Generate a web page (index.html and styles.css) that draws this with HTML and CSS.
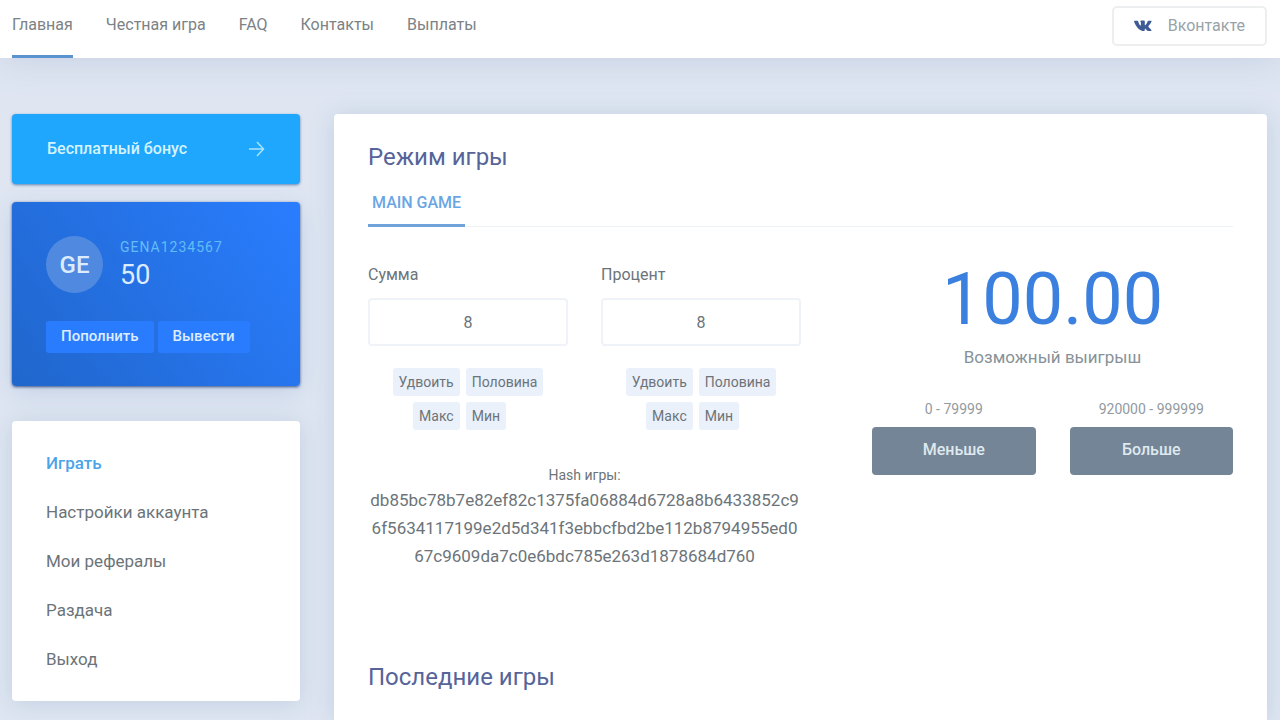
FILE: index.html
```html
<!DOCTYPE html>
<html lang="ru">
<head>
<meta charset="utf-8">
<meta name="viewport" content="width=device-width, initial-scale=1">
<title>Режим игры</title>
<link rel="stylesheet" href="styles.css">
</head>
<body>
<header class="topbar">
  <nav class="topnav">
    <a class="topnav-link is-active" href="#">Главная</a>
    <a class="topnav-link" href="#">Честная игра</a>
    <a class="topnav-link" href="#">FAQ</a>
    <a class="topnav-link" href="#">Контакты</a>
    <a class="topnav-link" href="#">Выплаты</a>
  </nav>
  <a class="social" href="#">
    <svg class="social-icon" viewBox="0 0 18 12" aria-hidden="true"><path d="M0.6 0.8h2.9c.3 0 .5.2.6.5.6 2 1.500 3.700 2.300 4.300.3.200.5.100.5-.3V2.700c0-.7-.3-.9-.8-1.100.3-.6.9-1 1.900-1h2c.6 0 .8.3.8.8v3.500c0 .4.200.5.5.3.800-.600 1.700-2.200 2.300-3.700.1-.4.4-.7.8-.7h2.500c.6 0 .8.300.6.8-.5 1.400-2.200 3.500-2.900 4.300-.3.400-.3.600 0 1 .7.700 2.200 2.100 2.700 3.100.3.600 0 1-.6 1h-2.600c-.5 0-.8-.2-1.100-.5-.6-.700-1.200-1.500-1.700-1.800-.400-.2-.5 0-.5.400v1c0 .600-.2.900-.9.900C5.500 11 2.300 7.200.1 1.700-.1 1.100.1.800.6.800z"/></svg>
    <span>Вконтакте</span>
  </a>
</header>

<main class="layout">
  <aside class="sidebar">
    <a class="bonus" href="#">
      <span>Бесплатный бонус</span>
      <svg class="bonus-arrow" viewBox="0 0 16 18" aria-hidden="true"><path d="M0 9h14M8 2l6.500 7L8 16"/></svg>
    </a>

    <section class="account">
      <div class="account-user">
        <div class="avatar">GE</div>
        <div>
          <div class="account-name">GENA1234567</div>
          <div class="account-balance">50</div>
        </div>
      </div>
      <div class="account-actions">
        <button class="account-btn" type="button">Пополнить</button>
        <button class="account-btn" type="button">Вывести</button>
      </div>
    </section>

    <nav class="menu">
      <a class="menu-link is-active" href="#">Играть</a>
      <a class="menu-link" href="#">Настройки аккаунта</a>
      <a class="menu-link" href="#">Мои рефералы</a>
      <a class="menu-link" href="#">Раздача</a>
      <a class="menu-link" href="#">Выход</a>
    </nav>
  </aside>

  <section class="panel">
    <h2 class="panel-title">Режим игры</h2>
    <div class="tabs">
      <button class="tab" type="button">MAIN GAME</button>
    </div>

    <div class="game">
      <div class="bet">
        <div class="fields">
          <div class="field">
            <label class="field-label" for="sum">Сумма</label>
            <input class="field-input" id="sum" type="text" value="8">
            <div class="chips">
              <button class="chip" type="button">Удвоить</button>
              <button class="chip" type="button">Половина</button>
              <button class="chip" type="button">Макс</button>
              <button class="chip" type="button">Мин</button>
            </div>
          </div>
          <div class="field">
            <label class="field-label" for="percent">Процент</label>
            <input class="field-input" id="percent" type="text" value="8">
            <div class="chips">
              <button class="chip" type="button">Удвоить</button>
              <button class="chip" type="button">Половина</button>
              <button class="chip" type="button">Макс</button>
              <button class="chip" type="button">Мин</button>
            </div>
          </div>
        </div>
        <div class="hash">
          <div class="hash-label">Hash игры:</div>
          <div class="hash-value">db85bc78b7e82ef82c1375fa06884d6728a8b6433852c9<wbr>6f5634117199e2d5d341f3ebbcfbd2be112b8794955ed0<wbr>67c9609da7c0e6bdc785e263d1878684d760</div>
        </div>
      </div>

      <div class="outcome">
        <div class="win">100.00</div>
        <div class="win-label">Возможный выигрыш</div>
        <div class="choices">
          <div class="choice">
            <div class="range">0 - 79999</div>
            <button class="choice-btn" type="button">Меньше</button>
          </div>
          <div class="choice">
            <div class="range">920000 - 999999</div>
            <button class="choice-btn" type="button">Больше</button>
          </div>
        </div>
      </div>
    </div>

    <h2 class="panel-title">Последние игры</h2>
  </section>
</main>
</body>
</html>
```

FILE: styles.css
```css
* {
  box-sizing: border-box;
}

body {
  margin: 0;
  min-height: 100vh;
  display: flex;
  flex-direction: column;
  background: #dfe6f2;
  color: #6c7479;
  font-family: Roboto, "Noto Sans", sans-serif;
  font-size: 16px;
  line-height: 24px;
}

a {
  color: inherit;
  text-decoration: none;
}

button,
input {
  font: inherit;
  color: inherit;
}

button {
  border: 0;
  cursor: pointer;
}

.topbar {
  display: flex;
  justify-content: space-between;
  height: 58px;
  padding: 0 13px 0 12px;
  background: #fff;
  box-shadow: 0 2px 36px rgba(100, 120, 160, 0.2);
}

.topnav {
  display: flex;
  gap: 33px;
}

.topnav-link {
  padding-top: 13px;
  border-bottom: 3px solid transparent;
  color: #7c8285;
}

.topnav-link.is-active {
  border-color: #5b93d0;
}

.social {
  display: flex;
  align-items: center;
  gap: 16px;
  height: 40px;
  margin-top: 6px;
  padding: 0 20px;
  border: 2px solid #eceeef;
  border-radius: 5px;
  color: #98a3a8;
}

.social-icon {
  width: 18px;
  height: 12px;
  fill: #3f5b95;
}

.layout {
  flex: 1;
  display: grid;
  grid-template-columns: 288px minmax(0, 1fr);
  gap: 34px;
  padding: 56px 13px 0 12px;
}

.sidebar {
  padding-bottom: 18px;
}

.bonus {
  display: flex;
  align-items: center;
  justify-content: space-between;
  height: 70px;
  padding: 0 35px;
  border-radius: 4px;
  background: #1ea7fd;
  box-shadow: 0 1px 3px rgba(40, 90, 150, 0.7);
  color: #d5f3ff;
  font-weight: 500;
}

.bonus-arrow {
  width: 16px;
  height: 18px;
  fill: none;
  stroke: #a9e4ff;
  stroke-width: 1.5;
}

.account {
  margin-top: 18px;
  padding: 34px 34px 33px;
  border-radius: 4px;
  background: linear-gradient(55deg, #2066cc, #2a7dff);
  box-shadow: 0 1px 3px rgba(20, 50, 110, 0.8), 0 6px 24px rgba(80, 120, 180, 0.2);
  color: #dcecff;
}

.account-user {
  display: flex;
  gap: 17px;
}

.avatar {
  display: flex;
  align-items: center;
  justify-content: center;
  width: 57px;
  height: 57px;
  border-radius: 50%;
  background: #5089e0;
  font-size: 24px;
  font-weight: 500;
}

.account-name {
  color: #62bdf8;
  font-size: 14px;
  line-height: 22px;
  letter-spacing: 1px;
}

.account-balance {
  font-size: 27px;
  line-height: 35px;
}

.account-actions {
  display: flex;
  gap: 4px;
  margin-top: 28px;
}

.account-btn {
  height: 32px;
  padding: 0 15px 2px;
  border-radius: 3px;
  background: #2a7cff;
  font-size: 15px;
  font-weight: 500;
}

.menu {
  display: flex;
  flex-direction: column;
  gap: 25px;
  margin-top: 35px;
  padding: 30px 34px;
  border-radius: 4px;
  background: #fff;
  box-shadow: 0 2px 24px rgba(90, 125, 165, 0.22);
  font-size: 17px;
}

.menu-link.is-active {
  color: #4ba3e8;
  font-weight: 500;
}

.panel {
  padding: 30px 34px 0;
  border-radius: 4px 4px 0 0;
  background: #fff;
  box-shadow: 0 2px 24px rgba(90, 125, 165, 0.22);
}

.panel-title {
  margin: 0;
  color: #56649a;
  font-size: 24px;
  font-weight: 400;
  line-height: 26px;
}

.tabs {
  display: flex;
  margin-top: 20px;
  border-bottom: 1px solid #eef3f8;
}

.tab {
  height: 37px;
  padding: 0 4px 8px;
  margin-bottom: -1px;
  border-bottom: 3px solid #6fa3da;
  background: none;
  color: #6ba6e4;
  font-weight: 500;
}

.game {
  display: grid;
  grid-template-columns: minmax(0, 6fr) minmax(0, 5fr);
  gap: 71px;
  margin-top: 36px;
  margin-bottom: 94px;
}

.fields {
  display: grid;
  grid-template-columns: 1fr 1fr;
  gap: 33px;
}

.field-label {
  display: block;
}

.field-input {
  width: 100%;
  height: 48px;
  margin-top: 11px;
  border: 2px solid #eff2f6;
  border-radius: 4px;
  background: #fff;
  text-align: center;
}

.chips {
  display: grid;
  grid-template-columns: auto auto;
  justify-content: center;
  justify-items: start;
  gap: 6px;
  margin-top: 22px;
}

.chip {
  height: 28px;
  padding: 0 6px;
  border-radius: 3px;
  background: #ebf1fb;
  font-size: 14px;
}

.chip:nth-child(odd) {
  justify-self: end;
}

.hash {
  margin-top: 34px;
  text-align: center;
}

.hash-label {
  font-size: 14px;
  line-height: 22px;
}

.hash-value {
  font-size: 17px;
  line-height: 28px;
}

.outcome {
  text-align: center;
}

.win {
  color: #3b80de;
  font-size: 72px;
  line-height: 74px;
}

.win-label {
  margin-top: 8px;
  color: #879298;
  font-size: 17px;
}

.choices {
  display: grid;
  grid-template-columns: 1fr 1fr;
  gap: 34px;
  margin-top: 30px;
}

.range {
  color: #929a9f;
  font-size: 14px;
  line-height: 20px;
}

.choice-btn {
  width: 100%;
  height: 48px;
  margin-top: 8px;
  padding-bottom: 3px;
  border-radius: 4px;
  background: #748597;
  color: #dfe9ee;
  font-weight: 500;
}
```
